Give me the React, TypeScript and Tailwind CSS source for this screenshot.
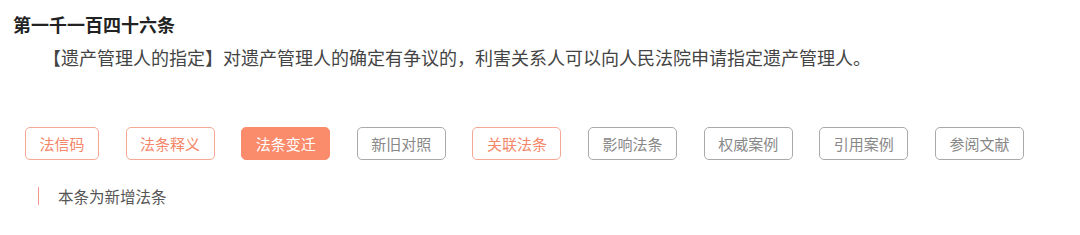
const font = { fontFamily: '"Noto Sans CJK SC", "Noto Sans", sans-serif' };

type Tab = { label: string; kind: "orange" | "active" | "grey" };

const tabs: Tab[] = [
  { label: "法信码", kind: "orange" },
  { label: "法条释义", kind: "orange" },
  { label: "法条变迁", kind: "active" },
  { label: "新旧对照", kind: "grey" },
  { label: "关联法条", kind: "orange" },
  { label: "影响法条", kind: "grey" },
  { label: "权威案例", kind: "grey" },
  { label: "引用案例", kind: "grey" },
  { label: "参阅文献", kind: "grey" },
];

const tabClass: Record<Tab["kind"], string> = {
  orange: "border-[#f5a892] text-[#f4876a] bg-white",
  active: "border-[#fa8b6b] bg-[#fa8b6b] text-white",
  grey: "border-[#aaaaaa] text-[#888888] bg-white",
};

export default function App() {
  return (
    <div className="h-[235px] w-[1080px] bg-white" style={font}>
      <div className="pl-[13px] pt-[11px]">
        <h3 className="text-[18px] font-bold leading-[26px] text-[#222222]">
          第一千一百四十六条
        </h3>
        <p className="mt-[6px] pl-[30px] text-[18px] leading-[28px] text-[#444444]">
          【遗产管理人的指定】对遗产管理人的确定有争议的，利害关系人可以向人民法院申请指定遗产管理人。
        </p>
      </div>
      <div className="mt-[56px] flex gap-[26.6px] pl-[25px]">
        {tabs.map((t) => (
          <button
            key={t.label}
            type="button"
            className={`h-[33px] rounded-[5px] border px-[13.5px] text-[15px] leading-none ${tabClass[t.kind]}`}
          >
            {t.label}
          </button>
        ))}
      </div>
      <div className="mt-[26px] flex items-center pl-[38px]">
        <span className="h-[18px] w-px bg-[#f09a8a]" />
        <span className="ml-[19px] text-[15.5px] leading-[20px] text-[#555555]">本条为新增法条</span>
      </div>
    </div>
  );
}
